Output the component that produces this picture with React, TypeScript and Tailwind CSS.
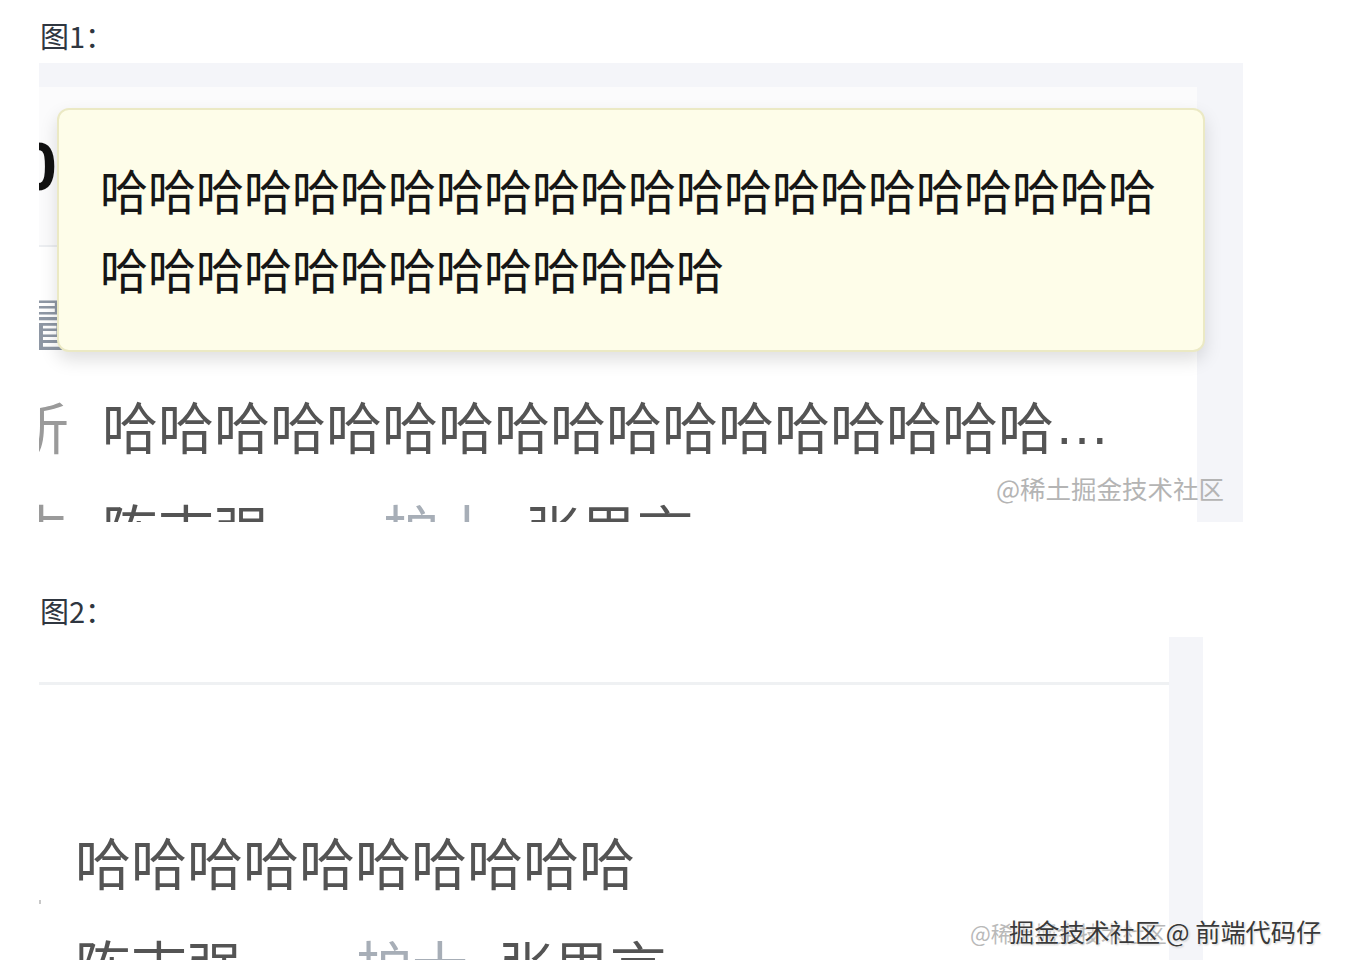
import React from "react";

function Row({
  label,
  labelColor = "text-[#9a9a9a]",
  children,
}: {
  label?: string;
  labelColor?: string;
  children: React.ReactNode;
}) {
  return (
    <div className="flex h-[103px] items-center text-[56px] leading-none">
      <div className="flex w-[30px] shrink-0 justify-end">
        <span className={`whitespace-nowrap ${labelColor}`}>{label}</span>
      </div>
      <div className="ml-[33px] flex whitespace-nowrap text-[#545454]">{children}</div>
    </div>
  );
}

function People() {
  return (
    <>
      <span className="w-[281px] shrink-0">陈志强</span>
      <span className="w-[142px] shrink-0 text-[#a7aeb7]">护士</span>
      <span>张思言</span>
    </>
  );
}

function Fig1() {
  return (
    <div className="relative h-[459px] w-[1204px] overflow-hidden bg-[#f4f5f9] pr-[46px] pt-[24px]">
      <div className="h-full rounded-tr-[12px] bg-white">
        <div className="flex h-[160px] items-center border-b-2 border-[#eceef1] bg-[#fbfbfc]">
          <div className="flex w-[18px] shrink-0 justify-end">
            <span className="whitespace-nowrap font-['Liberation_Sans',sans-serif] text-[68px] font-bold leading-none text-[#111]">
              0
            </span>
          </div>
        </div>
        <div className="pt-[23px]">
          <Row label="数量" labelColor="text-[#8e97a4]">
            <span>—</span>
          </Row>
          <Row label="分析">
            <span>哈哈哈哈哈哈哈哈哈哈哈哈哈哈哈哈哈</span>
            <span className="font-['Liberation_Sans',sans-serif]">…</span>
          </Row>
          <Row label="医生">
            <People />
          </Row>
        </div>
      </div>

      <div className="absolute left-[18px] top-[45px] h-[244px] w-[1148px] rounded-[12px] border-2 border-[#ebe9c4] bg-[#fefde9] pl-[41px] pr-[43px] pt-[40px] text-[48px] leading-[79px] text-[#161616] shadow-[0_8px_18px_rgba(0,0,0,0.13)]">
        哈哈哈哈哈哈哈哈哈哈哈哈哈哈哈哈哈哈哈哈哈哈哈哈哈哈哈哈哈哈哈哈哈哈哈
      </div>

      <div className="absolute left-[957px] top-[412px] whitespace-nowrap text-[25.5px] leading-none text-[#b4b4b4]">
        @稀土掘金技术社区
      </div>
    </div>
  );
}

function Fig2() {
  return (
    <div className="relative flex h-[323px] w-[1164px] overflow-hidden bg-white">
      <div className="flex-1">
        <div className="h-[48px] border-b-[3px] border-[#eff1f3]" />
        <div className="relative pt-[124px]">
          <div className="absolute left-0 top-[215px] h-[4px] w-[2px] bg-[#c8c8c8]" />
          <div className="flex h-[103px] items-center pl-[36px] text-[56px] leading-none text-[#545454]">
            哈哈哈哈哈哈哈哈哈哈
          </div>
          <div className="flex h-[103px] items-center whitespace-nowrap pl-[36px] text-[56px] leading-none text-[#545454]">
            <People />
          </div>
        </div>
      </div>
      <div className="h-full w-[34px] shrink-0 bg-[#f4f5f9]" />
      <div className="absolute left-[931px] top-[284px] whitespace-nowrap text-[22px] leading-none text-[#b9b9b9]">
        @稀土掘金技术社区
      </div>
    </div>
  );
}

export default function App() {
  return (
    <div className="relative h-[972px] w-[1348px] overflow-hidden bg-white pl-[39px] pt-[15px] font-['Noto_Sans_CJK_SC','Noto_Sans',sans-serif]">
      <p className="mb-[8px] h-[40px] pl-[1px] text-[29px] leading-[40px] text-[#2f3640]">图1：</p>
      <Fig1 />
      <p className="mb-[7px] mt-[68px] h-[40px] pl-[1px] text-[29px] leading-[40px] text-[#2f3640]">图2：</p>
      <Fig2 />
      <div className="absolute left-[1009px] top-[919px] whitespace-nowrap text-[25.2px] leading-none text-[#3a3a3a] [text-shadow:0_0_2px_#fff,0_0_3px_#fff,1px_1px_2px_rgba(0,0,0,0.25)]">
        掘金技术社区 @ 前端代码仔
      </div>
    </div>
  );
}
